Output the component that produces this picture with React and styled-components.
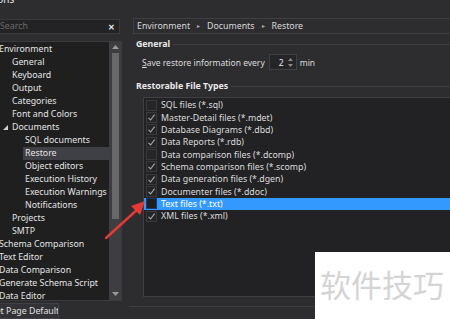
import React from 'react'
import styled, { createGlobalStyle } from 'styled-components'

const GlobalStyle = createGlobalStyle`
  html, body {
    margin: 0;
    padding: 0;
    background: #2d2d30;
    overflow: hidden;
  }
  body {
    font-family: "Noto Sans", "Liberation Sans", sans-serif;
    font-size: 8.8px;
    color: #e6e6e6;
  }
`

const treeItems = [
  { label: 'Environment', level: 0 },
  { label: 'General', level: 1 },
  { label: 'Keyboard', level: 1 },
  { label: 'Output', level: 1 },
  { label: 'Categories', level: 1 },
  { label: 'Font and Colors', level: 1 },
  { label: 'Documents', level: 1, open: true },
  { label: 'SQL documents', level: 2 },
  { label: 'Restore', level: 2, selected: true },
  { label: 'Object editors', level: 2 },
  { label: 'Execution History', level: 2 },
  { label: 'Execution Warnings', level: 2 },
  { label: 'Notifications', level: 2 },
  { label: 'Projects', level: 1 },
  { label: 'SMTP', level: 1 },
  { label: 'Schema Comparison', level: 0 },
  { label: 'Text Editor', level: 0 },
  { label: 'Data Comparison', level: 0 },
  { label: 'Generate Schema Script', level: 0 },
  { label: 'Data Editor', level: 0 },
]

const fileTypes = [
  { label: 'SQL files (*.sql)', checked: false },
  { label: 'Master-Detail files (*.mdet)', checked: true },
  { label: 'Database Diagrams (*.dbd)', checked: true },
  { label: 'Data Reports (*.rdb)', checked: true },
  { label: 'Data comparison files (*.dcomp)', checked: false },
  { label: 'Schema comparison files (*.scomp)', checked: true },
  { label: 'Data generation files (*.dgen)', checked: true },
  { label: 'Documenter files (*.ddoc)', checked: true },
  { label: 'Text files (*.txt)', checked: false, selected: true },
  { label: 'XML files (*.xml)', checked: true },
]

function App() {
  return (
    <>
      <GlobalStyle />
      <Frame>
        <LeftCol>
          <Title>Options</Title>
          <SearchBox>
            <SearchText>Search</SearchText>
            <ClearIcon>✕</ClearIcon>
          </SearchBox>
          <TreePanel>
            <TreeList>
              {treeItems.map((item) => (
                <TreeRow key={item.label} level={item.level}>
                  {item.open && (
                    <Expander width="5" height="5" viewBox="0 0 5 5">
                      <path d="M5 0 L5 5 L0 5 Z" fill="#cfcfcf" />
                    </Expander>
                  )}
                  <TreeLabel selected={item.selected}>{item.label}</TreeLabel>
                </TreeRow>
              ))}
            </TreeList>
            <ScrollBar>
              <ScrollArrow width="7" height="5" viewBox="0 0 7 5">
                <path d="M3.5 0 L7 4 L0 4 Z" fill="#9a9a9a" />
              </ScrollArrow>
              <Thumb />
              <ScrollSpacer />
              <ScrollArrow width="7" height="5" viewBox="0 0 7 5">
                <path d="M0 0 L7 0 L3.5 4 Z" fill="#9a9a9a" />
              </ScrollArrow>
            </ScrollBar>
          </TreePanel>
          <ResetButton>Reset Page Defaults</ResetButton>
        </LeftCol>

        <RightCol>
          <Breadcrumb>
            <Crumb>Environment</Crumb>
            <Sep>▸</Sep>
            <Crumb>Documents</Crumb>
            <Sep>▸</Sep>
            <Crumb>Restore</Crumb>
          </Breadcrumb>

          <SectionHeader top={5}>
            <HeaderText>General</HeaderText>
            <HeaderLine />
          </SectionHeader>

          <SaveRow>
            <span><u>S</u>ave restore information every</span>
            <Spinner>
              <SpinValue>2</SpinValue>
              <SpinArrows>
                <svg width="5" height="3" viewBox="0 0 5 3"><path d="M2.5 0 L5 3 L0 3 Z" fill="#8a8a8a" /></svg>
                <svg width="5" height="3" viewBox="0 0 5 3"><path d="M0 0 L5 0 L2.5 3 Z" fill="#8a8a8a" /></svg>
              </SpinArrows>
            </Spinner>
            <span>min</span>
          </SaveRow>

          <SectionHeader top={11}>
            <HeaderText>Restorable File Types</HeaderText>
            <HeaderLine />
          </SectionHeader>

          <ListBox>
            {fileTypes.map((f) => (
              <FileRow key={f.label} selected={f.selected}>
                <CheckBox selected={f.selected}>
                  {f.checked && (
                    <svg width="9" height="9" viewBox="0 0 9 9">
                      <path d="M1.5 4.8 L3.6 7 L7.6 1.6" stroke="#a8a8a8" strokeWidth="1.1" fill="none" />
                    </svg>
                  )}
                </CheckBox>
                <FileLabel selected={f.selected}>{f.label}</FileLabel>
              </FileRow>
            ))}
          </ListBox>
          <BottomLine />
        </RightCol>

        <ArrowMark width="50" height="45" viewBox="0 0 50 45">
          <path d="M3 40 L36 10" stroke="#e53935" strokeWidth="2.4" strokeLinecap="round" fill="none" />
          <path d="M42 3 L28 8 L37 17 Z" fill="#e53935" />
        </ArrowMark>

        <Watermark>
          <WatermarkText>软件技巧</WatermarkText>
        </Watermark>
      </Frame>
    </>
  )
}

const Frame = styled.div`
  position: relative;
  display: flex;
  width: 450px;
  height: 319px;
  overflow: hidden;
  background: #2d2d30;
`

const LeftCol = styled.div`
  width: 128px;
  margin-left: -6px;
  flex-shrink: 0;
  display: flex;
  flex-direction: column;
`

const Title = styled.div`
  height: 14px;
  line-height: 14px;
  margin-top: -8px;
  margin-left: -17px;
  font-size: 10px;
  color: #e0e0e0;
`

const SearchBox = styled.div`
  margin-top: 13px;
  height: 15px;
  width: 126px;
  box-sizing: border-box;
  background: #232325;
  border: 1px solid #3a3a3d;
  display: flex;
  align-items: center;
  justify-content: space-between;
  padding: 0 4px 0 5px;
`

const SearchText = styled.span`
  color: #6a6a6a;
`

const ClearIcon = styled.span`
  color: #e8e8e8;
  font-size: 8px;
  font-weight: bold;
`

const TreePanel = styled.div`
  margin-top: 7px;
  height: 265px;
  box-sizing: border-box;
  background: #1f1f20;
  border: 1px solid #3a3a3d;
  display: flex;
  overflow: hidden;
`

const TreeList = styled.div`
  flex: 1;
  padding-top: 1px;
  min-width: 0;
`

const TreeRow = styled.div`
  position: relative;
  height: 13px;
  display: flex;
  align-items: center;
  padding-left: ${(p) => 2 + p.level * 13}px;
`

const TreeLabel = styled.span`
  line-height: 13px;
  padding: 0 2px;
  color: #e4e4e4;
  white-space: nowrap;
  background: ${(p) => (p.selected ? '#3f3f46' : 'transparent')};
  flex: ${(p) => (p.selected ? 1 : 'none')};
`

const Expander = styled.svg`
  position: absolute;
  left: 8px;
  top: 4px;
`

const ScrollBar = styled.div`
  width: 12px;
  flex-shrink: 0;
  background: #3e3e42;
  display: flex;
  flex-direction: column;
  align-items: center;
  padding: 3px 0;
  box-sizing: border-box;
`

const ScrollArrow = styled.svg`
  flex-shrink: 0;
`

const Thumb = styled.div`
  margin-top: 3px;
  width: 7px;
  height: 166px;
  background: #686868;
`

const ScrollSpacer = styled.div`
  flex: 1;
`

const ResetButton = styled.div`
  margin-top: 2px;
  margin-left: -19px;
  height: 16px;
  width: 84px;
  box-sizing: border-box;
  border: 1px solid #3f3f46;
  background: #333337;
  color: #e0e0e0;
  line-height: 14px;
  padding-left: 5px;
  white-space: nowrap;
  overflow: hidden;
`

const RightCol = styled.div`
  flex: 1;
  margin-left: 11px;
  display: flex;
  flex-direction: column;
  padding-top: 18px;
  margin-right: -20px;
`

const Breadcrumb = styled.div`
  height: 16px;
  box-sizing: border-box;
  border: 1px solid #3f3f46;
  display: flex;
  align-items: center;
  padding-left: 3px;
  gap: 5px;
  color: #d8d8d8;
`

const Crumb = styled.span`
  white-space: nowrap;
`

const Sep = styled.span`
  font-size: 6px;
  color: #b0b0b0;
  padding: 0 2px;
`

const SectionHeader = styled.div`
  margin-top: ${(p) => p.top}px;
  display: flex;
  align-items: center;
  gap: 3px;
  padding-left: 3px;
  height: 10px;
`

const HeaderText = styled.span`
  font-weight: bold;
  color: #e8e8e8;
  white-space: nowrap;
`

const HeaderLine = styled.div`
  flex: 1;
  height: 1px;
  background: #3f3f46;
`

const SaveRow = styled.div`
  margin-top: 5px;
  height: 16px;
  display: flex;
  align-items: center;
  gap: 3px;
  padding-left: 9px;
  font-size: 8.5px;
  color: #dcdcdc;
  white-space: nowrap;
`

const Spinner = styled.div`
  width: 28px;
  height: 16px;
  box-sizing: border-box;
  border: 1px solid #3f3f46;
  background: #252527;
  display: flex;
  align-items: center;
  justify-content: flex-end;
  padding-right: 3px;
  gap: 4px;
  margin-left: 1px;
`

const SpinValue = styled.span`
  color: #e8e8e8;
`

const SpinArrows = styled.div`
  display: flex;
  flex-direction: column;
  gap: 3px;
`

const ListBox = styled.div`
  margin-top: 6px;
  margin-left: 10px;
  height: 200px;
  box-sizing: border-box;
  border: 1px solid #3f3f46;
  background: #222224;
  padding-top: 1px;
`

const FileRow = styled.div`
  height: 12.35px;
  display: flex;
  align-items: center;
  padding-left: 2px;
  gap: 4px;
  background: ${(p) => (p.selected ? '#3399ff' : 'transparent')};
`

const CheckBox = styled.div`
  width: 11px;
  height: 11px;
  box-sizing: border-box;
  border: 1px solid ${(p) => (p.selected ? '#1b3c66' : '#3a3a3d')};
  background: ${(p) => (p.selected ? '#1e1e20' : '#252527')};
  display: flex;
  align-items: center;
  justify-content: center;
`

const FileLabel = styled.span`
  color: ${(p) => (p.selected ? '#ffffff' : '#dcdcdc')};
  white-space: nowrap;
  line-height: 12px;
`

const BottomLine = styled.div`
  margin-top: 9px;
  margin-left: -4px;
  height: 1px;
  background: #3f3f46;
`

const ArrowMark = styled.svg`
  position: absolute;
  left: 103px;
  top: 198px;
`

const Watermark = styled.div`
  position: absolute;
  left: 315px;
  top: 252px;
  width: 140px;
  height: 70px;
  background: #ffffff;
`

const WatermarkText = styled.div`
  margin-top: 14px;
  margin-left: 5px;
  font-family: "Noto Sans CJK SC", sans-serif;
  font-size: 31px;
  line-height: 36px;
  color: #d4d4d4;
`

export default App
